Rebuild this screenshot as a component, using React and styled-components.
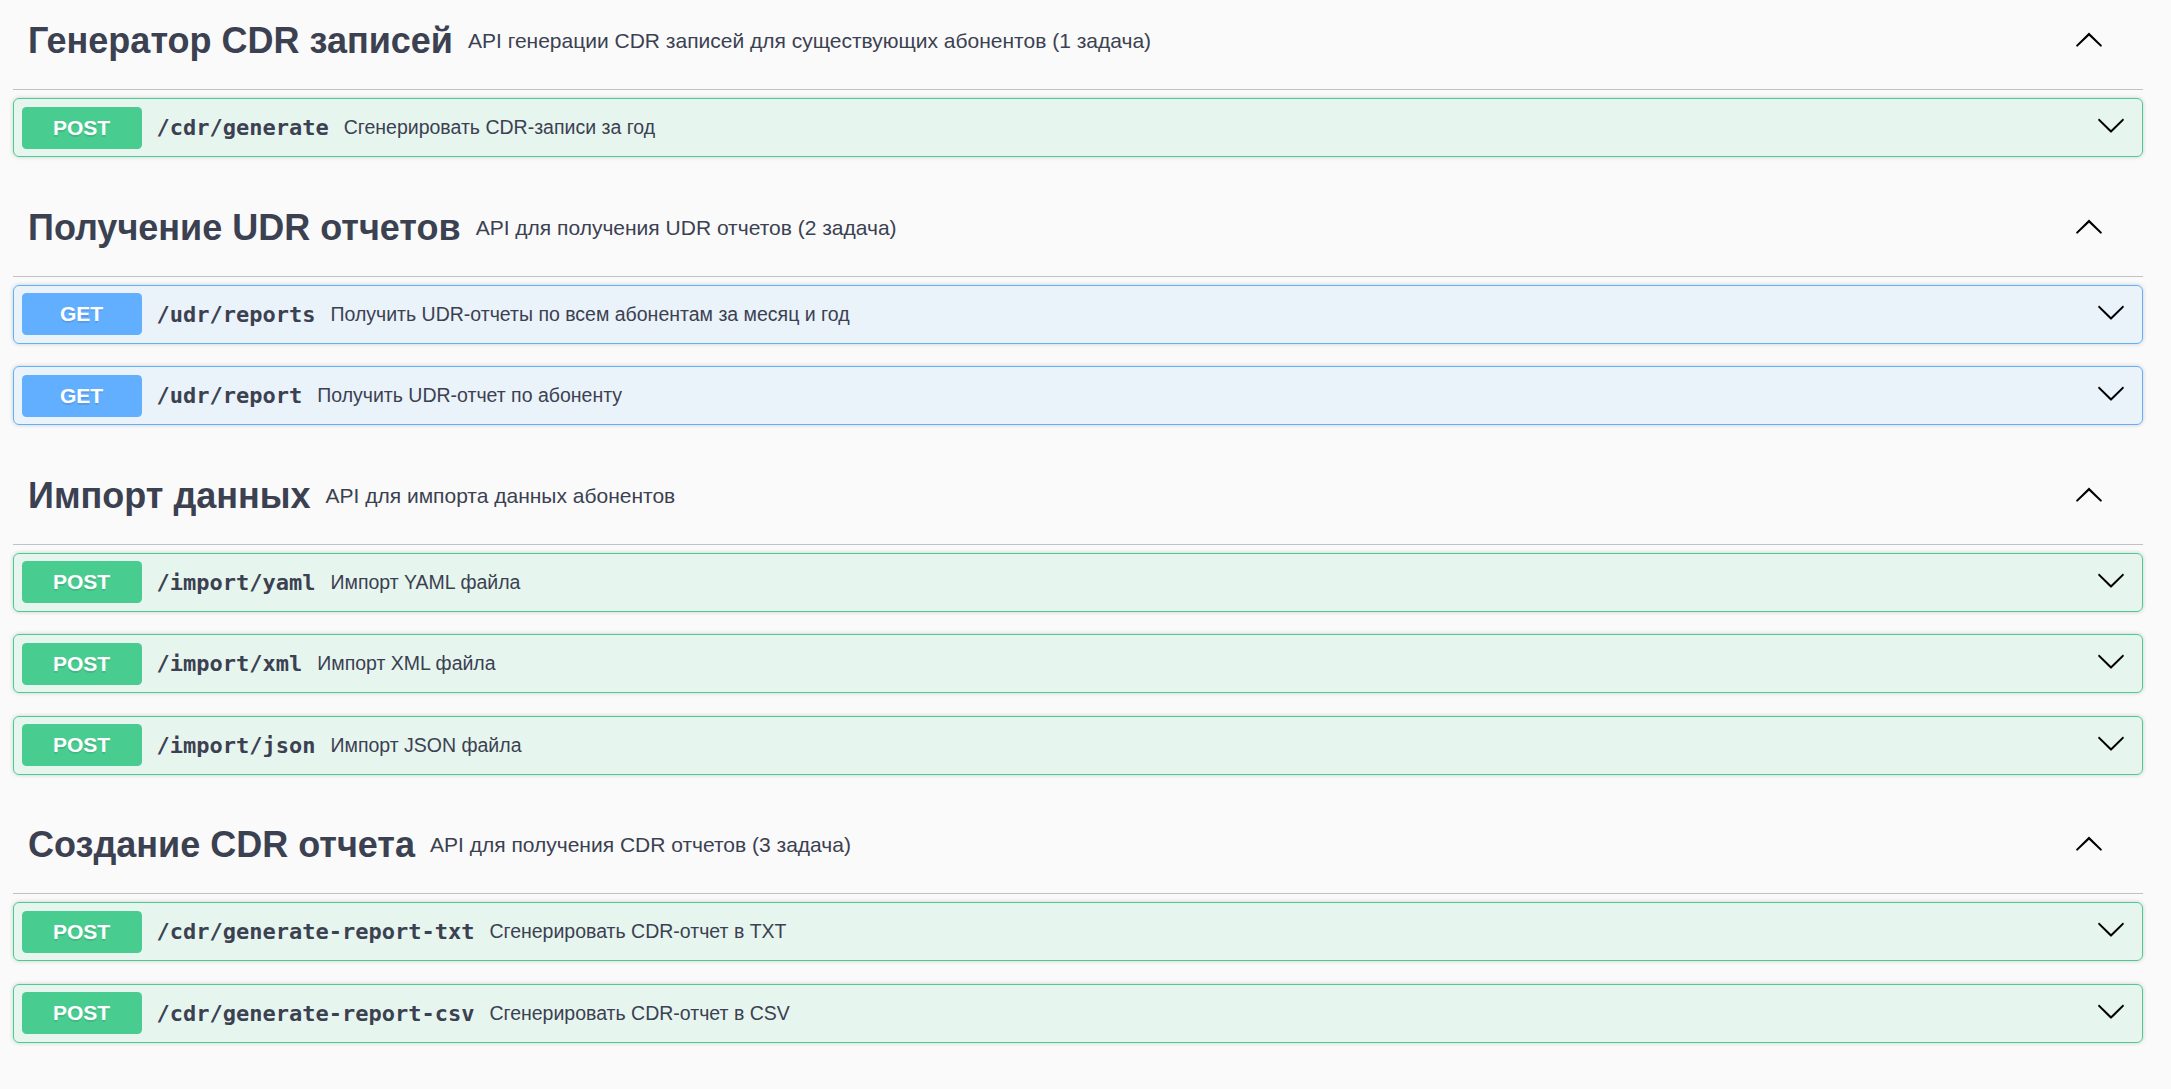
import React from 'react'
import styled, { createGlobalStyle } from 'styled-components'

const GlobalStyle = createGlobalStyle`
  html, body {
    margin: 0;
    padding: 0;
    background: #fafafa;
  }
  body {
    font-family: "Liberation Sans", Arial, sans-serif;
    color: #3b4151;
    overflow: hidden;
  }
`

const methods = {
  post: { color: '#49cc90', bg: 'rgba(73, 204, 144, 0.1)' },
  get: { color: '#61affe', bg: 'rgba(97, 175, 254, 0.1)' },
}

const tags = [
  {
    name: 'Генератор CDR записей',
    desc: 'API генерации CDR записей для существующих абонентов (1 задача)',
    ops: [
      { method: 'post', path: '/cdr/generate', summary: 'Сгенерировать CDR-записи за год' },
    ],
  },
  {
    name: 'Получение UDR отчетов',
    desc: 'API для получения UDR отчетов (2 задача)',
    ops: [
      { method: 'get', path: '/udr/reports', summary: 'Получить UDR-отчеты по всем абонентам за месяц и год' },
      { method: 'get', path: '/udr/report', summary: 'Получить UDR-отчет по абоненту' },
    ],
  },
  {
    name: 'Импорт данных',
    desc: 'API для импорта данных абонентов',
    ops: [
      { method: 'post', path: '/import/yaml', summary: 'Импорт YAML файла' },
      { method: 'post', path: '/import/xml', summary: 'Импорт XML файла' },
      { method: 'post', path: '/import/json', summary: 'Импорт JSON файла' },
    ],
  },
  {
    name: 'Создание CDR отчета',
    desc: 'API для получения CDR отчетов (3 задача)',
    ops: [
      { method: 'post', path: '/cdr/generate-report-txt', summary: 'Сгенерировать CDR-отчет в TXT' },
      { method: 'post', path: '/cdr/generate-report-csv', summary: 'Сгенерировать CDR-отчет в CSV' },
    ],
  },
]

const ArrowUp = () => (
  <svg width="30" height="30" viewBox="0 0 20 20" aria-hidden="true">
    <path d="M17.418 14.908c.272.268.709.268.979 0s.271-.701 0-.969l-7.908-7.83c-.27-.268-.707-.268-.979 0l-7.908 7.83c-.27.268-.27.701 0 .969.271.268.709.268.979 0L10 7.771l7.418 7.137z" />
  </svg>
)

const ArrowDown = () => (
  <svg width="30" height="30" viewBox="0 0 20 20" aria-hidden="true">
    <path d="M17.418 6.109c.272-.268.709-.268.979 0s.271.701 0 .969l-7.908 7.83c-.27.268-.707.268-.979 0l-7.908-7.83c-.27-.268-.27-.701 0-.969.271-.268.709-.268.979 0L10 13.25l7.418-7.141z" />
  </svg>
)

const Operation = ({ op }) => (
  <OpBlock $method={op.method}>
    <MethodBadge $method={op.method}>{op.method.toUpperCase()}</MethodBadge>
    <Path>{op.path}</Path>
    <Summary>{op.summary}</Summary>
    <OpArrow>
      <ArrowDown />
    </OpArrow>
  </OpBlock>
)

const App = () => {
  return (
    <Page>
      <GlobalStyle />
      {tags.map((tag) => (
        <TagSection key={tag.name}>
          <TagHeader>
            <TagTitle>{tag.name}</TagTitle>
            <TagDesc>{tag.desc}</TagDesc>
            <TagArrow>
              <ArrowUp />
            </TagArrow>
          </TagHeader>
          <OpList>
            {tag.ops.map((op) => (
              <Operation key={op.path} op={op} />
            ))}
          </OpList>
        </TagSection>
      ))}
    </Page>
  )
}

export default App

const Page = styled.div`
  margin-top: -7px;
  padding: 0 28px 0 13px;
`

const TagSection = styled.section`
  display: flex;
  flex-direction: column;
`

const TagHeader = styled.div`
  height: 97px;
  box-sizing: border-box;
  display: flex;
  align-items: center;
  padding: 0 39px 0 15px;
  border-bottom: 1px solid rgba(59, 65, 81, 0.3);
`

const TagTitle = styled.h3`
  margin: 0;
  font-size: 36px;
  font-weight: 700;
  color: #3b4151;
  white-space: nowrap;
`

const TagDesc = styled.small`
  flex: 1;
  padding: 0 15px;
  font-size: 21px;
  color: #3b4151;
`

const TagArrow = styled.span`
  display: flex;
  margin-bottom: 4px;
  fill: #000;
`

const OpList = styled.div`
  display: flex;
  flex-direction: column;
  gap: 22.5px;
  padding: 8px 0 22.5px;
`

const OpBlock = styled.div`
  display: flex;
  align-items: center;
  padding: 7.5px;
  border: 1px solid ${(p) => methods[p.$method].color};
  background: ${(p) => methods[p.$method].bg};
  border-radius: 6px;
  box-shadow: 0 0 4.5px rgba(0, 0, 0, 0.19);
`

const MethodBadge = styled.span`
  min-width: 120px;
  padding: 9px 0;
  border-radius: 4.5px;
  background: ${(p) => methods[p.$method].color};
  color: #fff;
  font-size: 21px;
  line-height: 24px;
  font-weight: 700;
  text-align: center;
  text-shadow: 0 1.5px 0 rgba(0, 0, 0, 0.1);
`

const Path = styled.span`
  padding: 0 15px;
  font-family: "DejaVu Sans Mono", "Liberation Mono", monospace;
  font-size: 22px;
  font-weight: 700;
  color: #3b4151;
  white-space: nowrap;
`

const Summary = styled.span`
  flex: 1;
  font-size: 19.5px;
  color: #3b4151;
`

const OpArrow = styled.span`
  display: flex;
  margin: 0 9px 5px 0;
  fill: #000;
`
